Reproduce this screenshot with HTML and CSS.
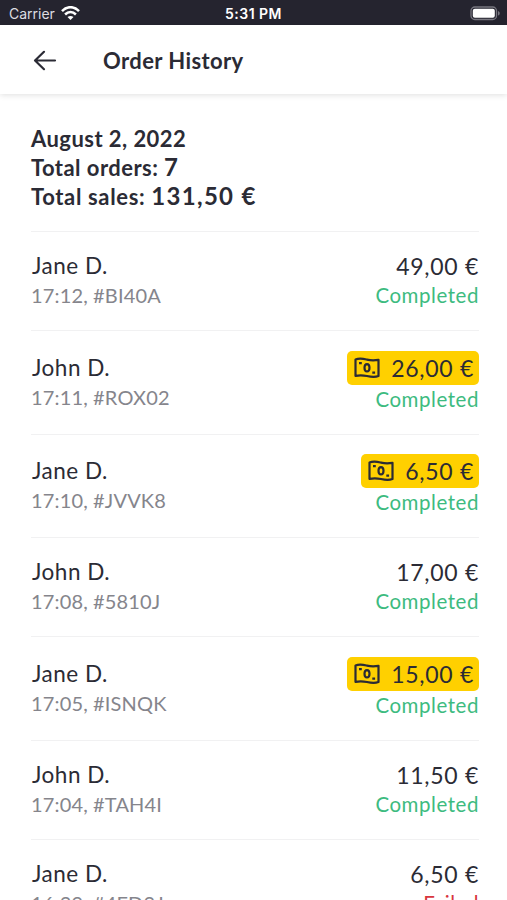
FILE: index.html
```html
<!DOCTYPE html>
<html lang="en">
<head>
  <meta charset="UTF-8" />
  <meta name="viewport" content="width=device-width, initial-scale=1.0" />
  <title>Order History</title>
  <link rel="stylesheet" href="styles.css">
</head>
<body>
  <svg width="0" height="0" class="sprite">
    <symbol id="cash" viewBox="0 0 26 22">
      <path d="M1.500 2.600C5.500.8 9 1.700 13 2.600s7.500.9 11.500.2v16.200c-4 1.500-7.500.9-11.500 0s-7.500-1-11.500-.2z" fill="none" stroke="currentColor" stroke-width="2.200" stroke-linejoin="round"/>
      <ellipse cx="13" cy="10.800" rx="2.500" ry="3.700" fill="none" stroke="currentColor" stroke-width="2.200"/>
      <path d="M5 6.200h2.800M18.300 15.600h2.800" stroke="currentColor" stroke-width="2.200"/>
    </symbol>
  </svg>

  <div class="status-bar">
    <div class="carrier">
      <span>Carrier</span>
      <svg width="19" height="15" viewBox="0 0 19 15" fill="none" stroke="#fff" stroke-width="2.500">
        <path d="M1 5.200C6-.2 13-.2 18 5.200"/>
        <path d="M4.100 8.500c3.200-3.200 7.600-3.200 10.800 0"/>
        <path d="M6.500 11.100c1.900-1.600 4.100-1.600 6 0l-3 3z" fill="#fff" stroke="none"/>
      </svg>
    </div>
    <div class="clock">5:31 PM</div>
    <svg class="battery" width="31" height="15" viewBox="0 0 31 15">
      <rect x="1" y="1" width="25.500" height="12.500" rx="3.800" fill="none" stroke="#77767f" stroke-width="1.300"/>
      <rect x="2.800" y="2.800" width="22" height="9" rx="2" fill="#fff"/>
      <path d="M28 5c2.300.8 2.300 3.800 0 4.600z" fill="#77767f"/>
    </svg>
  </div>

  <header class="header">
    <svg width="24" height="22" viewBox="0 0 24 22" fill="none" stroke="#2b2b35" stroke-width="2.200" stroke-linecap="round" stroke-linejoin="round">
      <path d="M22 11.500H2.500M11 2.800l-9 8.700 9 8.700"/>
    </svg>
    <h1>Order History</h1>
  </header>

  <main class="content">
    <div class="summary">
      <div class="date">August 2, 2022</div>
      <div class="orders">Total orders: <span class="count">7</span></div>
      <div class="sales">Total sales: <span class="total">131,50 €</span></div>
    </div>

    <div class="order">
      <div><div class="name">Jane D.</div><div class="meta">17:12, #BI40A</div></div>
      <div class="right"><div class="price">49,00 €</div><div class="state">Completed</div></div>
    </div>
    <div class="order paid-cash">
      <div><div class="name">John D.</div><div class="meta">17:11, #ROX02</div></div>
      <div class="right"><div class="price cash"><svg><use href="#cash"/></svg>26,00 €</div><div class="state">Completed</div></div>
    </div>
    <div class="order paid-cash">
      <div><div class="name">Jane D.</div><div class="meta">17:10, #JVVK8</div></div>
      <div class="right"><div class="price cash"><svg><use href="#cash"/></svg>6,50 €</div><div class="state">Completed</div></div>
    </div>
    <div class="order">
      <div><div class="name">John D.</div><div class="meta">17:08, #5810J</div></div>
      <div class="right"><div class="price">17,00 €</div><div class="state">Completed</div></div>
    </div>
    <div class="order paid-cash">
      <div><div class="name">Jane D.</div><div class="meta">17:05, #ISNQK</div></div>
      <div class="right"><div class="price cash"><svg><use href="#cash"/></svg>15,00 €</div><div class="state">Completed</div></div>
    </div>
    <div class="order">
      <div><div class="name">John D.</div><div class="meta">17:04, #TAH4I</div></div>
      <div class="right"><div class="price">11,50 €</div><div class="state">Completed</div></div>
    </div>
    <div class="order">
      <div><div class="name">Jane D.</div><div class="meta">16:29, #4FD2J</div></div>
      <div class="right"><div class="price">6,50 €</div><div class="state failed">Failed</div></div>
    </div>
  </main>
</body>
</html>
```
FILE: styles.css
```css
* {
  box-sizing: border-box;
}
body {
  margin: 0;
  height: 900px;
  overflow: hidden;
  background: #fff;
  color: #2b2b35;
  font-family: Lato, "Liberation Sans", sans-serif;
}
.sprite {
  display: block;
}
.status-bar {
  display: grid;
  grid-template-columns: 1fr auto 1fr;
  align-items: center;
  height: 25px;
  padding: 2px 6px 0 9px;
  background: #25242f;
  color: #fff;
  font-family: Inter, sans-serif;
  font-size: 14px;
}
.carrier {
  display: flex;
  align-items: center;
  gap: 6px;
  color: #dddde1;
}
.clock {
  margin-right: 3px;
  font-weight: 600;
  letter-spacing: 0.5px;
}
.battery {
  justify-self: end;
}
.header {
  display: flex;
  align-items: center;
  gap: 46px;
  height: 69px;
  padding: 1px 33px 0;
  box-shadow: 0 1px 6px rgba(0, 0, 0, 0.13);
}
h1 {
  margin: 0;
  font-size: 22px;
  font-weight: 700;
  letter-spacing: 0.4px;
}
.content {
  padding: 0 28px 0 31px;
}
.summary {
  height: 137px;
  padding-top: 30px;
  font-size: 22px;
  font-weight: 700;
  line-height: 29px;
  letter-spacing: 0.45px;
}
.sales {
  letter-spacing: 0.65px;
}
.total,
.count {
  font-size: 24px;
  line-height: 1;
}
.total {
  letter-spacing: 1.3px;
}
.order {
  display: flex;
  justify-content: space-between;
  height: 99px;
  padding: 19px 0 0;
  border-top: 1px solid #f1f1f2;
}
.paid-cash {
  height: 103.7px;
  padding-top: 21.5px;
}
.name {
  padding-left: 1px;
  font-size: 22.5px;
  line-height: 30px;
  letter-spacing: 0.5px;
}
.meta {
  color: #85858c;
  font-size: 20px;
  line-height: 29px;
  letter-spacing: 0.15px;
}
.right {
  display: flex;
  flex-direction: column;
  align-items: flex-end;
}
.price {
  font-size: 23px;
  line-height: 30px;
  letter-spacing: 0.7px;
}
.cash {
  display: flex;
  align-items: center;
  gap: 11px;
  height: 34px;
  margin-top: -2px;
  padding: 0 5px 0 7px;
  border-radius: 5px;
  background: #ffd000;
}
.cash svg {
  width: 26px;
  height: 22px;
}
.state {
  color: #3dbb80;
  font-size: 20.5px;
  line-height: 29px;
  letter-spacing: 0.55px;
}
.failed {
  color: #d8363e;
}
```
